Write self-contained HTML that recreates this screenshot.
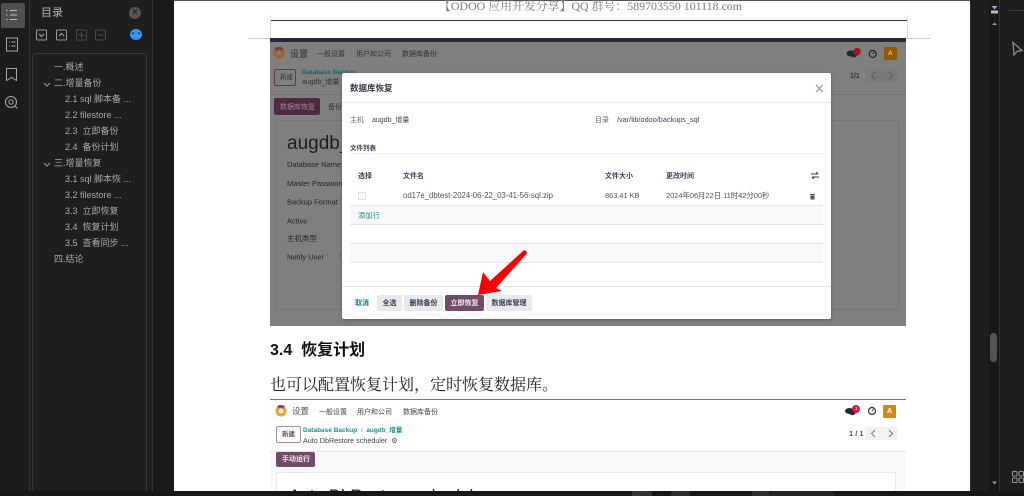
<!DOCTYPE html>
<html><head><meta charset="utf-8">
<style>
html,body{margin:0;padding:0;width:1024px;height:496px;overflow:hidden;background:#1e1e1e}
body{position:relative;font-family:"Liberation Sans","Noto Sans CJK SC",sans-serif}
div,svg{position:absolute}
#w{left:0;top:0;width:1024px;height:496px;filter:blur(.3px)}
.t{position:absolute;white-space:nowrap;line-height:1}
.toc{color:#a9a9a9;font-size:9px;margin-top:1px}
.g{color:#4d4d4d;font-size:7px}
.g2{color:#333;font-size:7px}
.f{color:#262626;font-size:7.500px}
.m{color:#4a5160;font-size:7px}
.th{color:#3b4252;font-size:7px;font-weight:bold}
.btn{background:#e7e9ed;color:#374151;font-size:7px;text-align:center;border-radius:2px;line-height:17px;height:16px;top:295px;font-weight:bold}
.hl{left:350px;width:473px;height:1px;background:#e4e4e4}
.sh{left:350px;width:473px;background:#f9f9f9}
</style></head><body><div id="w">
<!-- left rail -->
<div style="left:0;top:0;width:29px;height:491px;background:#1c1c1c;border-right:1px solid #333"></div>
<div style="left:1px;top:3px;width:24px;height:25px;background:#505050;border-radius:2px"></div>
<svg style="left:0;top:0" width="30" height="115" fill="none" stroke="#a8a8a8" stroke-width="1">
<path d="M6 10.5h1.500M10 10.5h7M6 15h1.500M10 15h7M6 19.5h1.500M10 19.5h7" stroke="#c0c0c0"/>
<path d="M6.500 38h11v13h-11zM9 42h1M11.500 42h4M9 46h1M11.500 46h4"/>
<path d="M6.500 68.500h10v12l-5-3-5 3z"/>
<circle cx="11" cy="102" r="5.500"/><circle cx="11" cy="102" r="2.200"/><path d="M15 106l2.500 2.500"/>
</svg>
<!-- toc panel -->
<div style="left:30px;top:0;width:122px;height:491px;background:#1e1e1e;border-right:1px solid #353535"></div>
<div style="left:153px;top:0;width:21px;height:491px;background:#1a1a1a"></div>
<div class="t" style="left:41px;top:8px;font-size:11px;color:#b8b8b8">目录</div>
<div style="left:129px;top:7px;width:12px;height:12px;border-radius:50%;background:#565656"></div>
<div class="t" style="left:129px;top:8px;width:12px;text-align:center;font-size:10px;color:#222;font-weight:bold">×</div>
<svg style="left:35px;top:29px" width="112" height="13" fill="none" stroke-width="1">
<rect x="1.500" y="1" width="10" height="10" rx="1" stroke="#999"/><path d="M4 5l2.500 2.500L9 5" stroke="#aaa"/>
<rect x="21.500" y="1" width="10" height="10" rx="1" stroke="#999"/><path d="M24 7l2.500-2.500L29 7" stroke="#aaa"/>
<rect x="41.500" y="1" width="10" height="10" rx="1" stroke="#484848"/><path d="M43.500 6h6M46.500 3v6" stroke="#505050"/>
<rect x="60.500" y="1" width="10" height="10" rx="1" stroke="#484848"/><path d="M62.500 6h6" stroke="#505050"/>
</svg>
<div style="left:130px;top:29px;width:12px;height:11px;border-radius:50%;background:#3d93f0"></div>
<svg style="left:130px;top:29px" width="12" height="11" fill="none" stroke="#123" stroke-width="1"><path d="M2 5l2-1.500M10 5L8 3.500"/></svg>
<div style="left:32px;top:53px;width:113px;height:437px;border:1px solid #383838;border-radius:3px"></div>

<div class="t toc" style="left:54px;top:62px">一.概述</div>
<div class="t toc" style="left:54px;top:78px">二.增量备份</div>
<div class="t toc" style="left:65px;top:94px">2.1 sql 脚本备 ...</div>
<div class="t toc" style="left:65px;top:110px">2.2 filestore ...</div>
<div class="t toc" style="left:65px;top:126px">2.3 &nbsp;立即备份</div>
<div class="t toc" style="left:65px;top:142px">2.4 &nbsp;备份计划</div>
<div class="t toc" style="left:54px;top:158px">三.增量恢复</div>
<div class="t toc" style="left:65px;top:174px">3.1 sql 脚本恢 ...</div>
<div class="t toc" style="left:65px;top:190px">3.2 filestore ...</div>
<div class="t toc" style="left:65px;top:206px">3.3 &nbsp;立即恢复</div>
<div class="t toc" style="left:65px;top:222px">3.4 &nbsp;恢复计划</div>
<div class="t toc" style="left:65px;top:238px">3.5 &nbsp;查看同步 ...</div>
<div class="t toc" style="left:54px;top:254px">四.结论</div>
<svg style="left:42px;top:79px" width="10" height="90" fill="none" stroke="#a0a0a0"><path d="M2 4l3 3 3-3M2 84l3 3 3-3"/></svg>

<!-- page -->
<div style="left:174px;top:0;width:796px;height:491px;background:#fff"></div>
<div style="left:174px;top:0;width:796px;height:1px;background:#555"></div>
<div class="t" style="left:439px;top:1px;font-family:'Liberation Serif','Noto Serif CJK SC',serif;font-size:11.900px;color:#7c7c7c">【ODOO 应用开发分享】QQ 群号：589703550 101118.com</div>
<div style="left:270px;top:20px;width:637px;height:1px;background:#333"></div>
<div style="left:270px;top:15px;width:1px;height:24px;background:#ddd"></div>
<div style="left:907px;top:15px;width:1px;height:24px;background:#ddd"></div>
<div style="left:248px;top:38px;width:22px;height:1px;background:#ccc"></div>
<div style="left:907px;top:38px;width:23px;height:1px;background:#ccc"></div>

<!-- screenshot 1 -->
<div style="left:270px;top:38px;width:636px;height:288px;background:#7f7f7f"></div>
<div style="left:270px;top:38px;width:636px;height:4px;background:#2a2a2e"></div>
<svg style="left:273px;top:47px" width="12" height="12"><circle cx="6" cy="6" r="4" fill="none" stroke="#a5601c" stroke-width="3"/><path d="M2.500 3a4.500 4.500 0 0 1 7 0" stroke="#6e3a5c" stroke-width="3" fill="none"/></svg>
<div class="t g2" style="left:290px;top:50px;font-size:9px;color:#2e2e2e">设置</div>
<div class="t g2" style="left:317px;top:51px">一般设置</div>
<div class="t g2" style="left:356px;top:51px">用户和公司</div>
<div class="t g2" style="left:402px;top:51px">数据库备份</div>
<div style="left:274px;top:69px;width:20px;height:15px;border:1px solid #5a3b4c;border-radius:2px"></div>
<div class="t g2" style="left:280px;top:75px;font-size:6.500px">新建</div>
<div class="t" style="left:302px;top:70px;font-size:6.500px;font-weight:bold;color:#0a6b68">Database Backup</div>
<div class="t g2" style="left:302px;top:79px;font-size:7px">augdb_增量</div>
<div style="left:270px;top:94px;width:636px;height:1px;background:#747474"></div>
<div style="left:274px;top:98px;width:46px;height:17px;background:#4c2b40;border-radius:2px"></div>
<div class="t" style="left:280px;top:104px;font-size:7px;color:#9a8a94">数据库恢复</div>
<div class="t g2" style="left:328px;top:104px">备份</div>
<div style="left:275px;top:120px;width:622px;height:188px;border:1px solid #747474;border-radius:2px"></div>
<div class="t" style="left:287px;top:134px;font-size:19px;color:#1d1d1d">augdb_</div>
<div class="t f" style="left:287px;top:161px">Database Name</div>
<div class="t f" style="left:287px;top:180px">Master Password</div>
<div class="t f" style="left:287px;top:198px">Backup Format <sup style="font-size:4px;color:#0a6b68">?</sup></div>
<div class="t f" style="left:287px;top:217px">Active <sup style="font-size:4px;color:#0a6b68">?</sup></div>
<div class="t f" style="left:287px;top:235px">主机类型</div>
<div class="t f" style="left:287px;top:253px">Notify User <sup style="font-size:4px;color:#0a6b68">?</sup></div>
<div style="left:339px;top:252px;width:3px;height:7px;border:1px solid #6e6e6e"></div>
<svg style="left:844px;top:46px" width="56" height="36">
<ellipse cx="7" cy="7.500" rx="4.500" ry="3" fill="#1e2530"/><ellipse cx="10" cy="9" rx="3" ry="2.300" fill="#1e2530"/>
<circle cx="13" cy="5.700" r="3.800" fill="#a01428"/>
<circle cx="28.700" cy="8" r="3.500" fill="none" stroke="#222" stroke-width="1.200"/><path d="M28.700 8l1.500-2" stroke="#222"/>
<rect x="40" y="1" width="13" height="13" rx="1" fill="#8e5a06"/>
</svg>
<div class="t" style="left:888px;top:51px;font-size:6.500px;color:#d8c8a8;font-weight:bold">A</div>
<div style="left:866px;top:69px;width:32px;height:13px;background:#7a7a7a;border-radius:2px"></div>
<svg style="left:866px;top:69px" width="33" height="13" fill="none" stroke="#5a5a5a"><path d="M9 3L5.500 6.500 9 10M23 3l3.500 3.500L23 10"/></svg>
<div class="t" style="left:850px;top:73px;font-size:7px;font-weight:bold;color:#333">1/1</div>

<!-- modal -->
<div style="left:342px;top:73px;width:489px;height:246px;background:#fff;border-radius:2px;box-shadow:0 1px 3px rgba(0,0,0,.25)"></div>
<div class="t" style="left:350px;top:84px;font-size:8.500px;font-weight:bold;color:#333842">数据库恢复</div>
<svg style="left:814px;top:83px" width="11" height="11" stroke="#8a8a8a" fill="none"><path d="M2 2l7 7M9 2L2 9"/></svg>
<div style="left:342px;top:102px;width:489px;height:1px;background:#e8e8e8"></div>
<div class="t m" style="left:350px;top:117px;color:#6b6b6b">主机</div>
<div class="t m" style="left:372px;top:117px;color:#3b4252">augdb_增量</div>
<div class="t m" style="left:595px;top:117px;color:#6b6b6b">目录</div>
<div class="t m" style="left:617px;top:116px;color:#3b4252;font-size:7.300px">/var/lib/odoo/backups_sql</div>
<div class="t th" style="left:350px;top:146px;font-size:6.500px">文件列表</div>
<div style="left:350px;top:153px;width:473px;height:1px;background:#eee"></div>
<div class="t th" style="left:358px;top:173px">选择</div>
<div class="t th" style="left:403px;top:173px">文件名</div>
<div class="t th" style="left:605px;top:173px">文件大小</div>
<div class="t th" style="left:666px;top:173px">更改时间</div>
<svg style="left:810px;top:171px" width="10" height="9" stroke="#333842" fill="none"><path d="M1 3h7M6 1l2 2M2 6h7M4 8L2 6"/></svg>
<div style="left:358px;top:192px;width:6px;height:6px;border:1px solid #e0e0e0"></div>
<div class="t m" style="left:403px;top:192px;font-size:7.800px">od17e_dbtest-2024-06-22_03-41-56-sql.zip</div>
<div class="t m" style="left:605px;top:192px;font-size:7.400px">863.41 KB</div>
<div class="t m" style="left:666px;top:192px;font-size:7.400px">2024年06月22日 11时42分00秒</div>
<svg style="left:809px;top:192px" width="7" height="8" fill="#555"><path d="M1 2h5v1H1zM1.500 3.500h4V7.500h-4z"/></svg>
<div class="sh" style="top:206px;height:18px"></div>
<div class="hl" style="top:205px"></div>
<div class="t" style="left:358px;top:212px;font-size:7.300px;color:#0d9488">添加行</div>
<div class="hl" style="top:224px"></div>
<div class="sh" style="top:244px;height:18px"></div>
<div class="hl" style="top:243px"></div>
<div class="hl" style="top:262px"></div>
<div style="left:342px;top:286px;width:489px;height:1px;background:#e6e6e6"></div>
<div class="t" style="left:355px;top:300px;font-size:7px;font-weight:bold;color:#0d7f80">取消</div>
<div class="btn t" style="left:377px;width:25px">全选</div>
<div class="btn t" style="left:404px;width:39px">删除备份</div>
<div class="btn t" style="left:445px;width:39px;background:#714b67;color:#f0e8ee">立即恢复</div>
<div class="btn t" style="left:486px;width:46px">数据库管理</div>
<svg style="left:470px;top:245px" width="62" height="54"><path d="M8 50 L13 27 L20 36 L53 6 C55 4 58 7 56.500 9 L26 43 L32 46 Z" fill="#f00"/></svg>

<!-- text -->
<div class="t" style="left:270px;top:343px;font-size:16px;font-weight:bold;color:#111">3.4 &nbsp;恢复计划</div>
<div class="t" style="left:270px;top:378px;font-family:'Liberation Serif','Noto Serif CJK SC',serif;font-size:16px;color:#222">也可以配置恢复计划，定时恢复数据库。</div>

<!-- screenshot 2 -->
<div style="left:270px;top:399px;width:636px;height:1px;background:#777"></div>
<svg style="left:275px;top:405px" width="12" height="12"><circle cx="6" cy="6" r="4" fill="none" stroke="#f0a020" stroke-width="3"/><path d="M3 2.500a4.500 4.500 0 0 1 6 0" stroke="#9b3a8f" stroke-width="3" fill="none"/></svg>
<div class="t" style="left:292px;top:407px;font-size:8.500px;color:#555">设置</div>
<div class="t g" style="left:319px;top:409px;color:#444">一般设置</div>
<div class="t g" style="left:357px;top:409px;color:#444">用户和公司</div>
<div class="t g" style="left:403px;top:409px;color:#444">数据库备份</div>
<div style="left:276px;top:426px;width:23px;height:15px;border:1px solid #a8899e;border-radius:2px"></div>
<div class="t g" style="left:282px;top:432px;color:#714b67;font-weight:bold;font-size:6.500px">新建</div>
<div class="t" style="left:303px;top:428px;font-size:6.500px;font-weight:bold;color:#17908e">Database Backup &nbsp;<span style="color:#777;font-weight:normal">/</span>&nbsp; augdb_增量</div>
<div class="t" style="left:303px;top:437px;font-size:7.200px;color:#444">Auto DbRestore scheduler &nbsp;⚙</div>
<svg style="left:844px;top:404px" width="56" height="36">
<ellipse cx="5.500" cy="7" rx="4.500" ry="3" fill="#1f2937"/><ellipse cx="8.500" cy="9" rx="3" ry="2.200" fill="#1f2937"/>
<circle cx="12" cy="5" r="4" fill="#e8113f"/>
<circle cx="28" cy="7" r="3.500" fill="none" stroke="#333" stroke-width="1.200"/><path d="M28 7l1.500-2" stroke="#333"/>
<rect x="39" y="1" width="13" height="13" rx="1" fill="#d08a10"/>
</svg>
<div class="t" style="left:855px;top:407px;font-size:4.500px;font-weight:bold;color:#fff">1</div>
<div class="t" style="left:887px;top:408px;font-size:7px;font-weight:bold;color:#fff">A</div>
<div class="t" style="left:849px;top:430px;font-size:7.500px;font-weight:bold;color:#555">1 / 1</div>
<div style="left:865px;top:427px;width:33px;height:13px;background:#f1f2f4;border-radius:2px"></div>
<svg style="left:865px;top:427px" width="33" height="13" fill="none" stroke="#777"><path d="M10 3L6.500 6.500 10 10M24 3l3.500 3.500L24 10"/></svg>
<div style="left:270px;top:451px;width:636px;height:40px;background:#f8f9fa"></div>
<div style="left:270px;top:451px;width:636px;height:1px;background:#e6e8e9"></div>
<div style="left:276px;top:452px;width:39px;height:15px;background:#714b67;border-radius:2px"></div>
<div class="t" style="left:282px;top:456px;font-size:7px;font-weight:bold;color:#f0e8ee">手动运行</div>
<div style="left:276px;top:472px;width:620px;height:20px;background:#fff;border:1px solid #e8e8e8;border-radius:2px;box-sizing:border-box"></div>
<div class="t" style="left:289px;top:487px;font-size:17px;color:#222">Auto DbRestore scheduler</div>

<!-- right side -->
<div style="left:970px;top:0;width:30px;height:491px;background:#1e1e1e;border-left:1px solid #2d2d2d;box-sizing:border-box"></div>
<div style="left:989px;top:0;width:10px;height:491px;background:#181818"></div>
<div style="left:999px;top:0;width:1px;height:491px;background:#333"></div>
<div style="left:1000px;top:0;width:24px;height:491px;background:#1d1d1d"></div>
<svg style="left:990px;top:4px" width="9" height="24" fill="#aab"><path d="M1.500 2h6L4.500 5.500z"/><rect x="1" y="6.500" width="7" height="3" fill="#bbb"/><path d="M2 21h5l-2.500-2.500z" fill="#99a"/></svg>
<div style="left:990px;top:333px;width:7px;height:29px;background:#565656;border-radius:4px"></div>
<svg style="left:990px;top:480px" width="9" height="6" fill="#99a"><path d="M2 1.500h5L4.500 4.500z"/></svg>
<div style="left:1009px;top:10px;width:15px;height:1px;background:#3a3a3a"></div>
<svg style="left:1011px;top:41px" width="13" height="16" fill="none" stroke="#8a8a8a" stroke-width="1.300"><path d="M2 1.500L3 14 6 10.500 11 9.500z"/></svg>
<svg style="left:1011px;top:470px" width="13" height="14" fill="none" stroke="#999"><rect x="1.500" y="1.500" width="4.500" height="4.500" rx="1"/><rect x="8" y="1.500" width="4.500" height="4.500" rx="1"/><rect x="1.500" y="8" width="4.500" height="4.500" rx="1"/><rect x="8" y="8" width="4.500" height="4.500" rx="1"/></svg>

<!-- bottom bar -->
<div style="left:0;top:491px;width:1024px;height:5px;background:#171717"></div>
<div style="left:632px;top:491px;width:20px;height:5px;background:#333;border-radius:2px 2px 0 0"></div>
<div style="left:671px;top:491px;width:19px;height:5px;background:#2c2c2c"></div>
<div style="left:752px;top:491px;width:18px;height:5px;background:#2c2c2c"></div>
<div style="left:771px;top:491px;width:63px;height:5px;background:#262626"></div>
</div></body></html>
